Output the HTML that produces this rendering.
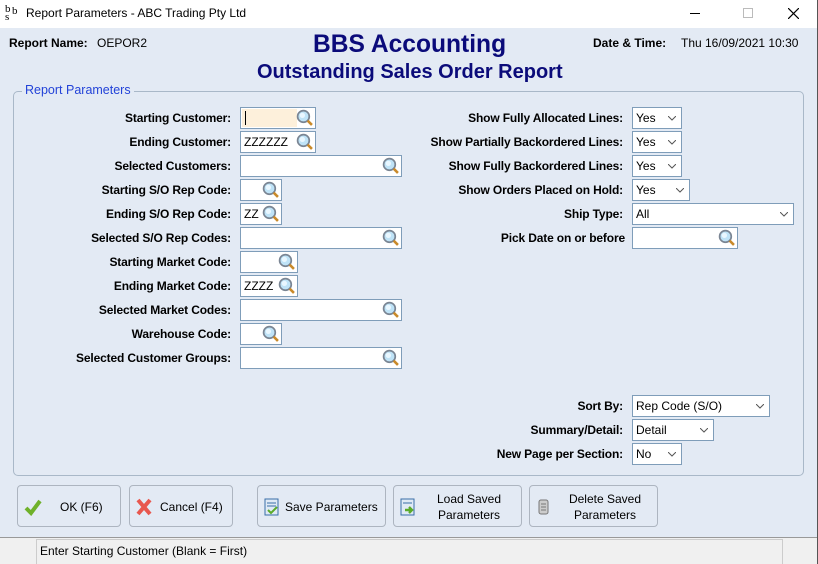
<!DOCTYPE html><html><head><style>
*{box-sizing:border-box;margin:0;padding:0}
body{width:818px;height:564px;position:relative;overflow:hidden;background:#e3eaf4;font-family:"Liberation Sans",Arial,sans-serif;font-size:12px;color:#000}
.a{position:absolute}
.lb{position:absolute;font-weight:bold;text-align:right;white-space:nowrap;letter-spacing:-0.15px}
.f{position:absolute;height:22px;background:#fff;border:1px solid #7f9db9;padding:2px 3px;line-height:16px}
.mg{position:absolute;right:2px;top:1px}
.dd{position:absolute;height:22px;background:#fff;border:1px solid #7f9db9;padding:2px 3px;line-height:16px}
.dd svg{position:absolute;right:5px;top:8px}
.btn{position:absolute;top:485px;height:42px;border:1px solid #adb5c0;border-radius:4px;background:#e3eaf4;text-align:center;line-height:16px}
</style></head><body>
<div class="a" style="left:0;top:0;width:818px;height:28px;background:#fff"></div>
<div class="a" style="left:5px;top:5px;font-size:11px;line-height:8px;font-family:'Liberation Serif',serif">b<br>s</div>
<div class="a" style="left:12px;top:5px;font-size:11px;font-family:'Liberation Serif',serif">b</div>
<div class="a" style="left:26px;top:6px;font-size:12px">Report Parameters - ABC Trading Pty Ltd</div>
<div class="a" style="left:690px;top:13px;width:10px;height:1px;background:#000"></div>
<div class="a" style="left:743px;top:8px;width:10px;height:10px;border:1px solid #bbb"></div>
<svg class="a" style="left:788px;top:8px" width="11" height="11"><path d="M0 0L11 11M11 0L0 11" stroke="#000" stroke-width="1.2"/></svg>
<div class="a" style="left:817px;top:0;width:1px;height:564px;background:#555"></div>

<div class="a" style="left:9px;top:36px;font-weight:bold">Report Name:</div>
<div class="a" style="left:97px;top:36px">OEPOR2</div>
<div class="a" style="left:313px;top:31px;font-size:24.6px;font-weight:bold;color:#0b0b7a">BBS Accounting</div>
<div class="a" style="left:257px;top:61px;font-size:20px;font-weight:bold;color:#0b0b7a">Outstanding Sales Order Report</div>
<div class="a" style="left:593px;top:36px;font-weight:bold">Date &amp; Time:</div>
<div class="a" style="left:681px;top:36px">Thu 16/09/2021 10:30</div>

<div class="a" style="left:13px;top:91px;width:791px;height:385px;border:1px solid #a9b8c8;border-radius:5px"></div>
<div class="a" style="left:22px;top:83px;padding:0 3px;background:#e3eaf4;color:#2343d8;font-size:12.5px">Report Parameters</div>

<svg width="0" height="0" style="position:absolute"><defs><symbol id="m" viewBox="0 0 16 16"><circle cx="7" cy="7" r="5.5" fill="#bfe3f7" stroke="#7a8593" stroke-width="1.6"/><circle cx="6" cy="6" r="2.5" fill="#e9f7ff"/><path d="M11 11l4 4" stroke="#c98a2a" stroke-width="2.4"/></symbol></defs></svg>

<div class="lb" style="right:587px;top:111px">Starting Customer:</div>
<div class="f" style="left:240px;top:107px;width:76px"><div class="a" style="left:1px;top:1px;width:55px;height:18px;background:#fdf0db"></div><div class="a" style="left:4px;top:3px;width:1px;height:14px;background:#000"></div><svg class="mg" width="17" height="17"><use href="#m"/></svg></div>
<div class="lb" style="right:587px;top:135px">Ending Customer:</div>
<div class="f" style="left:240px;top:131px;width:76px">ZZZZZZ<svg class="mg" width="17" height="17"><use href="#m"/></svg></div>
<div class="lb" style="right:587px;top:159px">Selected Customers:</div>
<div class="f" style="left:240px;top:155px;width:162px"><svg class="mg" width="17" height="17"><use href="#m"/></svg></div>
<div class="lb" style="right:587px;top:183px">Starting S/O Rep Code:</div>
<div class="f" style="left:240px;top:179px;width:42px"><svg class="mg" width="17" height="17"><use href="#m"/></svg></div>
<div class="lb" style="right:587px;top:207px">Ending S/O Rep Code:</div>
<div class="f" style="left:240px;top:203px;width:42px">ZZ<svg class="mg" width="17" height="17"><use href="#m"/></svg></div>
<div class="lb" style="right:587px;top:231px">Selected S/O Rep Codes:</div>
<div class="f" style="left:240px;top:227px;width:162px"><svg class="mg" width="17" height="17"><use href="#m"/></svg></div>
<div class="lb" style="right:587px;top:255px">Starting Market Code:</div>
<div class="f" style="left:240px;top:251px;width:58px"><svg class="mg" width="17" height="17"><use href="#m"/></svg></div>
<div class="lb" style="right:587px;top:279px">Ending Market Code:</div>
<div class="f" style="left:240px;top:275px;width:58px">ZZZZ<svg class="mg" width="17" height="17"><use href="#m"/></svg></div>
<div class="lb" style="right:587px;top:303px">Selected Market Codes:</div>
<div class="f" style="left:240px;top:299px;width:162px"><svg class="mg" width="17" height="17"><use href="#m"/></svg></div>
<div class="lb" style="right:587px;top:327px">Warehouse Code:</div>
<div class="f" style="left:240px;top:323px;width:42px"><svg class="mg" width="17" height="17"><use href="#m"/></svg></div>
<div class="lb" style="right:587px;top:351px">Selected Customer Groups:</div>
<div class="f" style="left:240px;top:347px;width:162px"><svg class="mg" width="17" height="17"><use href="#m"/></svg></div>

<div class="lb" style="right:195px;top:111px">Show Fully Allocated Lines:</div>
<div class="dd" style="left:632px;top:107px;width:50px">Yes<svg width="8" height="5"><path d="M0 0l4 4 4-4" stroke="#555" fill="none"/></svg></div>
<div class="lb" style="right:195px;top:135px">Show Partially Backordered Lines:</div>
<div class="dd" style="left:632px;top:131px;width:50px">Yes<svg width="8" height="5"><path d="M0 0l4 4 4-4" stroke="#555" fill="none"/></svg></div>
<div class="lb" style="right:195px;top:159px">Show Fully Backordered Lines:</div>
<div class="dd" style="left:632px;top:155px;width:50px">Yes<svg width="8" height="5"><path d="M0 0l4 4 4-4" stroke="#555" fill="none"/></svg></div>
<div class="lb" style="right:195px;top:183px">Show Orders Placed on Hold:</div>
<div class="dd" style="left:632px;top:179px;width:58px">Yes<svg width="8" height="5"><path d="M0 0l4 4 4-4" stroke="#555" fill="none"/></svg></div>
<div class="lb" style="right:195px;top:207px">Ship Type:</div>
<div class="dd" style="left:632px;top:203px;width:162px">All<svg width="8" height="5"><path d="M0 0l4 4 4-4" stroke="#555" fill="none"/></svg></div>
<div class="lb" style="right:193px;top:231px">Pick Date on or before</div>
<div class="f" style="left:632px;top:227px;width:106px"><svg class="mg" width="17" height="17"><use href="#m"/></svg></div>

<div class="lb" style="right:195px;top:399px">Sort By:</div>
<div class="dd" style="left:632px;top:395px;width:138px">Rep Code (S/O)<svg width="8" height="5"><path d="M0 0l4 4 4-4" stroke="#555" fill="none"/></svg></div>
<div class="lb" style="right:195px;top:423px">Summary/Detail:</div>
<div class="dd" style="left:632px;top:419px;width:82px">Detail<svg width="8" height="5"><path d="M0 0l4 4 4-4" stroke="#555" fill="none"/></svg></div>
<div class="lb" style="right:195px;top:447px">New Page per Section:</div>
<div class="dd" style="left:632px;top:443px;width:50px">No<svg width="8" height="5"><path d="M0 0l4 4 4-4" stroke="#555" fill="none"/></svg></div>

<div class="btn" style="left:17px;width:104px"><svg class="a" style="left:6px;top:12px" width="18" height="18"><path d="M2 10l5 5L16 3" stroke="#6fb12a" stroke-width="4" fill="none"/></svg><div class="a" style="left:42px;top:13px">OK (F6)</div></div>
<div class="btn" style="left:129px;width:104px"><svg class="a" style="left:6px;top:12px" width="16" height="18"><path d="M2 2l12 14M14 2L2 16" stroke="#e8574e" stroke-width="4"/></svg><div class="a" style="left:30px;top:13px">Cancel (F4)</div></div>
<div class="btn" style="left:257px;width:129px"><svg class="a" style="left:6px;top:12px" width="16" height="18"><rect x="1" y="1" width="13" height="16" fill="#dfe9f5" stroke="#3a6ea8"/><path d="M3 5h9M3 8h9" stroke="#3a6ea8"/><path d="M4 12l3 3 6-6" stroke="#5aab2a" stroke-width="2" fill="none"/></svg><div class="a" style="left:27px;top:13px">Save Parameters</div></div>
<div class="btn" style="left:393px;width:129px"><svg class="a" style="left:6px;top:12px" width="16" height="18"><rect x="1" y="1" width="13" height="16" fill="#dfe9f5" stroke="#3a6ea8"/><path d="M3 5h9" stroke="#3a6ea8"/><path d="M5 12h6M9 9l3 3-3 3" stroke="#5aab2a" stroke-width="2.4" fill="none"/></svg><div class="a" style="left:0;width:150px;top:5px">Load Saved<br>Parameters</div></div>
<div class="btn" style="left:529px;width:129px"><svg class="a" style="left:8px;top:13px" width="12" height="16"><rect x="1" y="1" width="9" height="14" rx="2" fill="#ccc" stroke="#777"/><path d="M3 5h5M3 8h5M3 11h5" stroke="#777"/></svg><div class="a" style="left:0;width:150px;top:5px">Delete Saved<br>Parameters</div></div>

<div class="a" style="left:0;top:537px;width:817px;height:27px;background:#f0f0f0;border-top:1px solid #999"></div>
<div class="a" style="left:36px;top:539px;width:747px;height:25px;border:1px solid #ccc;border-bottom:none;padding:4px 3px">Enter Starting Customer (Blank = First)</div>
</body></html>
